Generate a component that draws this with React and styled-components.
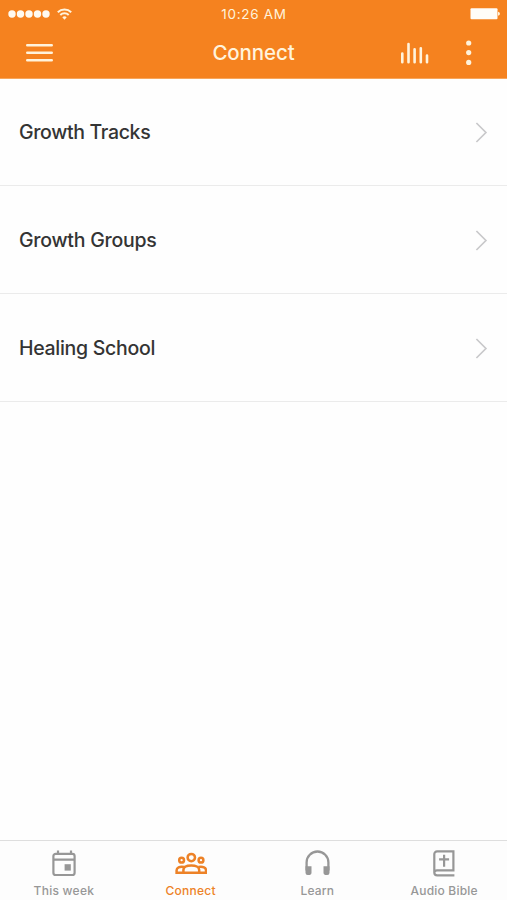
import React from 'react';
import styled, { createGlobalStyle } from 'styled-components';

const GlobalStyle = createGlobalStyle`
  * { box-sizing: border-box; }
  body { margin: 0; background: #fefefe; font-family: Inter, "Liberation Sans", sans-serif; }
  svg { display: block; }
`;

const Screen = styled.div`
  width: 507px;
  height: 900px;
  display: flex;
  flex-direction: column;
  background: #fefefe;
  overflow: hidden;
`;

const Header = styled.header`
  height: 79px;
  flex: none;
  background: #f5821f;
  border-bottom: 1px solid #f7a65c;
  color: #fff3dc;
`;

const StatusBar = styled.div`
  height: 27px;
  display: grid;
  grid-template-columns: 1fr auto 1fr;
  align-items: center;
  padding: 0 7px 0 8px;
`;

const Signal = styled.div`
  display: flex;
  align-items: center;
  gap: 7px;
`;

const Clock = styled.time`
  font-size: 13.5px;
  line-height: 26px;
  padding-top: 1px;
  letter-spacing: 0.7px;
`;

const BatteryBox = styled.div`
  justify-self: end;
`;

const NavBar = styled.div`
  height: 51px;
  display: grid;
  grid-template-columns: 1fr auto 1fr;
  align-items: center;
  padding: 0 35px 0 26px;
`;

const IconButton = styled.button`
  border: 0;
  padding: 0;
  background: none;
  color: inherit;
  display: block;
`;

const Title = styled.h1`
  margin: 0;
  padding-left: 9px;
  font-size: 20.5px;
  font-weight: 500;
  line-height: 51px;
  letter-spacing: -0.1px;
`;

const Actions = styled.div`
  display: flex;
  justify-content: flex-end;
  align-items: center;
  gap: 37px;
`;

const List = styled.main`
  flex: 1;
`;

const Row = styled.div`
  height: ${(p) => p.$height}px;
  display: flex;
  align-items: center;
  justify-content: space-between;
  padding: 1px 19px 0;
  border-bottom: 1px solid #ebebeb;
`;

const RowLabel = styled.span`
  padding-bottom: 1px;
  font-size: 19.5px;
  font-weight: 500;
  line-height: 24px;
  letter-spacing: ${(p) => p.$spacing}px;
  color: #343434;
`;

const TabBar = styled.nav`
  height: 60px;
  flex: none;
  display: grid;
  grid-template-columns: repeat(4, 1fr);
  border-top: 1px solid #dedede;
  background: #fdfdfd;
`;

const Tab = styled.div`
  display: flex;
  flex-direction: column;
  align-items: center;
  padding: 7px 0 0 1px;
  color: ${(p) => (p.$active ? '#ed8227' : '#979797')};
`;

const TabLabel = styled.span`
  margin-top: 5px;
  font-size: 12px;
  font-weight: 500;
  line-height: 15px;
  white-space: nowrap;
  letter-spacing: ${(p) => p.$spacing}px;
`;

const SignalDots = () => (
  <svg width="42" height="10" fill="#fffaf0">
    {[4, 12.5, 21, 29.5, 38].map((x) => <circle key={x} cx={x} cy="5" r="3.7" />)}
  </svg>
);

const Wifi = () => (
  <svg width="15" height="12" viewBox="0 0 15 12" fill="none" stroke="currentColor" strokeWidth="2">
    <path d="M.8 4.2a9.6 9.6 0 0 1 13.4 0M3.3 7a6 6 0 0 1 8.4 0" />
    <path d="M7.5 11.8 5.3 9.2a3.5 3.5 0 0 1 4.4 0Z" fill="currentColor" stroke="none" />
  </svg>
);

const Battery = () => (
  <svg width="30" height="12">
    <rect x=".5" y=".2" width="27" height="11" rx="1" fill="#fffdf9" />
    <path d="M28 3.8q2 .4 2 2t-2 2z" fill="currentColor" />
  </svg>
);

const Menu = () => (
  <svg width="27" height="20" stroke="currentColor" strokeWidth="2.6" strokeLinecap="round">
    <path d="M1.3 2.2h24.4M1.3 9.7h24.4M1.3 17.2h24.4" />
  </svg>
);

const Equalizer = () => (
  <svg width="29" height="22" stroke="currentColor" strokeWidth="2.6" strokeLinecap="round">
    <path d="M2.3 11.5V20.3M8.5 2v18.3M14.6 7.3v13M20.8 6.3v14M27 13.5v6.8" />
  </svg>
);

const More = () => (
  <svg width="6" height="26" fill="currentColor">
    {[3, 12.6, 22.4].map((y) => <circle key={y} cx="2.7" cy={y} r="2.6" />)}
  </svg>
);

const Chevron = () => (
  <svg width="13" height="21" fill="none" stroke="#c9c9cb" strokeWidth="1.7">
    <path d="M1.4 1 10.9 10.5 1.4 20" />
  </svg>
);

const CalendarIcon = () => (
  <svg width="32" height="30" fill="none" stroke="currentColor" strokeWidth="2.2">
    <rect x="5.4" y="5.8" width="21.2" height="21.2" rx="2.3" />
    <path d="M5 11.6h22M10 2.5v4M23 2.5v4" />
    <rect x="16.6" y="16.2" width="6.2" height="6.4" fill="currentColor" stroke="none" />
  </svg>
);

const PeopleIcon = () => (
  <svg width="32" height="30" fill="none" stroke="currentColor" strokeWidth="2.5">
    <circle cx="16.3" cy="9.6" r="3.7" />
    <circle cx="6.6" cy="12.2" r="2.4" />
    <circle cx="26" cy="12.2" r="2.4" />
    <path d="M8.4 24.7v-2.8c0-3 3.5-4.3 7.9-4.3s7.9 1.3 7.9 4.3v2.8" />
    <path d="M9.2 19c-4.8-.9-7.6.8-7.6 3.2v2.5H31v-2.5c0-2.4-2.8-4.1-7.6-3.2" />
  </svg>
);

const HeadphonesIcon = () => (
  <svg width="32" height="30" fill="none" stroke="currentColor" strokeWidth="2.3">
    <path d="M5.6 22.5V14.4a10.9 10.9 0 0 1 21.8 0v8.1" />
    <path d="M4.5 18.2h6v6.9q0 1.8-1.8 1.8h-2a2.2 2.2 0 0 1-2.2-2.2zM28.5 18.2h-6v6.9q0 1.8 1.8 1.8h2a2.2 2.2 0 0 0 2.2-2.2z" fill="currentColor" stroke="none" />
  </svg>
);

const BibleIcon = () => (
  <svg width="32" height="30" fill="none" stroke="currentColor" strokeWidth="2.2">
    <path d="M26.4 27.3H9.2a2.9 2.9 0 0 1-2.9-2.9V6.1a2.7 2.7 0 0 1 2.7-2.7h16.4v19H9.2a2.4 2.4 0 0 0-2.5 1.4" />
    <path d="M16.1 6.7v12M11.1 11.3h10" />
  </svg>
);

const rows = [
  { label: 'Growth Tracks', height: 107, spacing: -0.34 },
  { label: 'Growth Groups', height: 108, spacing: -0.25 },
  { label: 'Healing School', height: 108, spacing: -0.29 },
];

const tabs = [
  { label: 'This week', Icon: CalendarIcon, spacing: 0.25 },
  { label: 'Connect', Icon: PeopleIcon, active: true, spacing: 0.25 },
  { label: 'Learn', Icon: HeadphonesIcon, spacing: 0.2 },
  { label: 'Audio Bible', Icon: BibleIcon, spacing: 0.2 },
];

export default function App() {
  return (
    <>
      <GlobalStyle />
      <Screen>
        <Header>
          <StatusBar>
            <Signal><SignalDots /><Wifi /></Signal>
            <Clock>10:26 AM</Clock>
            <BatteryBox><Battery /></BatteryBox>
          </StatusBar>
          <NavBar>
            <IconButton aria-label="Menu"><Menu /></IconButton>
            <Title>Connect</Title>
            <Actions>
              <IconButton aria-label="Audio"><Equalizer /></IconButton>
              <IconButton aria-label="More"><More /></IconButton>
            </Actions>
          </NavBar>
        </Header>
        <List>
          {rows.map((r) => (
            <Row key={r.label} $height={r.height}>
              <RowLabel $spacing={r.spacing}>{r.label}</RowLabel>
              <Chevron />
            </Row>
          ))}
        </List>
        <TabBar>
          {tabs.map(({ label, Icon, active, spacing }) => (
            <Tab key={label} $active={active}>
              <Icon />
              <TabLabel $spacing={spacing}>{label}</TabLabel>
            </Tab>
          ))}
        </TabBar>
      </Screen>
    </>
  );
}
